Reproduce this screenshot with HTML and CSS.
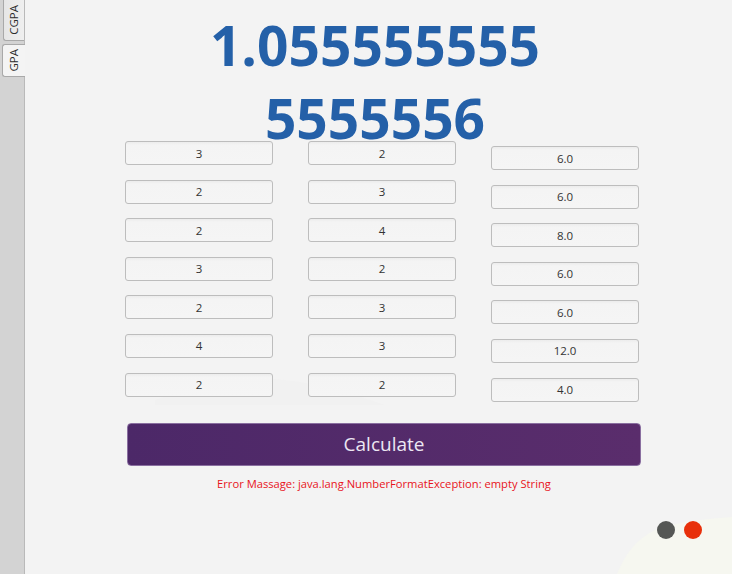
FILE: index.html
```html
<!DOCTYPE html>
<html>
<head>
<meta charset="utf-8">
<link rel="stylesheet" href="styles.css">
</head>
<body>
<div class="app">
  <div class="sidebar">
    <div class="tab tab-cgpa"><span class="tab-label">CGPA</span></div>
    <div class="tab tab-gpa"><span class="tab-label">GPA</span></div>
  </div>
  <div class="main">
    <svg class="bg-hill" width="707" height="574" viewBox="0 0 707 574" aria-hidden="true">
      <path d="M592 574 C 600 555, 610 540, 630 530 C 650 522, 680 519, 707 517 L 707 574 Z" fill="#f6f7f0"/>
      <path d="M130 400 C 170 385, 220 375, 260 380 C 300 385, 330 395, 360 405 L 130 405 Z" fill="#f1f1f1"/>
    </svg>
    <div class="result">1.0555555555555556</div>
    <div class="grid">
      <div class="col">
        <div class="field">3</div>
        <div class="field">2</div>
        <div class="field">2</div>
        <div class="field">3</div>
        <div class="field">2</div>
        <div class="field">4</div>
        <div class="field">2</div>
      </div>
      <div class="col">
        <div class="field">2</div>
        <div class="field">3</div>
        <div class="field">4</div>
        <div class="field">2</div>
        <div class="field">3</div>
        <div class="field">3</div>
        <div class="field">2</div>
      </div>
      <div class="col col-points">
        <div class="field">6.0</div>
        <div class="field">6.0</div>
        <div class="field">8.0</div>
        <div class="field">6.0</div>
        <div class="field">6.0</div>
        <div class="field">12.0</div>
        <div class="field">4.0</div>
      </div>
    </div>
    <button class="calc">Calculate</button>
    <div class="error">Error Massage: java.lang.NumberFormatException: empty String</div>
    <div class="dots">
      <span class="dot dot-gray"></span>
      <span class="dot dot-red"></span>
    </div>
  </div>
</div>
</body>
</html>
```
FILE: styles.css
```css
html, body {
  margin: 0;
  padding: 0;
}
body {
  width: 732px;
  height: 574px;
  overflow: hidden;
  font-family: "Open Sans", "Noto Sans", sans-serif;
}
.app {
  display: flex;
  height: 574px;
}
.sidebar {
  width: 24px;
  background: #d3d3d3;
  border-right: 1px solid #b9b9b9;
  display: flex;
  flex-direction: column;
  align-items: flex-end;
  padding-top: 0;
  gap: 3px;
  flex: none;
}
.tab {
  width: 21px;
  box-sizing: border-box;
  border: 1px solid #a9a9a9;
  border-right: none;
  border-radius: 3px 0 0 3px;
  display: flex;
  align-items: center;
  justify-content: center;
}
.tab-cgpa {
  height: 41px;
  border-top: none;
  border-radius: 0 0 0 3px;
  background: linear-gradient(to right, #e6e6e6, #efefef);
}
.tab-gpa {
  height: 33px;
  width: 23px;
  margin-right: -1px;
  background: #f4f4f4;
}
.tab-label {
  writing-mode: vertical-rl;
  transform: rotate(180deg);
  font-size: 11.5px;
  color: #2a2a2a;
  line-height: 1;
}
.main {
  flex: 1;
  position: relative;
  background: #f3f3f3;
  padding-top: 8px;
  display: flex;
  flex-direction: column;
}
.bg-hill {
  position: absolute;
  left: 0;
  top: 0;
}
.result {
  position: relative;
  width: 346px;
  margin-left: 177px;
  text-align: center;
  word-break: break-all;
  font-weight: 700;
  font-size: 55px;
  line-height: 73px;
  color: #2460a8;
  margin-bottom: -13px;
}
.grid {
  position: relative;
  display: flex;
  gap: 35px;
  margin-left: 100px;
}
.col {
  display: flex;
  flex-direction: column;
  gap: 14.6px;
  width: 148px;
}
.col-points {
  margin-top: 5px;
}
.field {
  height: 24px;
  box-sizing: border-box;
  border: 1px solid #bdbdbd;
  border-radius: 3px;
  background: linear-gradient(#ececec 0, #f4f4f4 3px, #f5f5f5 100%);
  font-size: 11.5px;
  color: #333;
  display: flex;
  align-items: center;
  justify-content: center;
}
.calc {
  position: relative;
  margin: 21px 0 0 102px;
  width: 514px;
  height: 43px;
  border: 1px solid #8a6fa0;
  border-radius: 4px;
  background: linear-gradient(to right, #4c2868, #5a2d6c);
  color: #ece6f2;
  font-family: "Open Sans", "Noto Sans", sans-serif;
  font-size: 19px;
  padding: 0;
}
.error {
  position: relative;
  margin-left: 102px;
  width: 514px;
  text-align: center;
  color: #e8141b;
  font-size: 11.2px;
  margin-top: 10px;
  line-height: 16px;
}
.dots {
  position: relative;
  display: flex;
  justify-content: flex-end;
  gap: 9px;
  padding-right: 30px;
  margin-top: 29px;
}
.dot {
  width: 18px;
  height: 18px;
  border-radius: 50%;
}
.dot-gray {
  background: #555755;
}
.dot-red {
  background: #e8300a;
}
```
